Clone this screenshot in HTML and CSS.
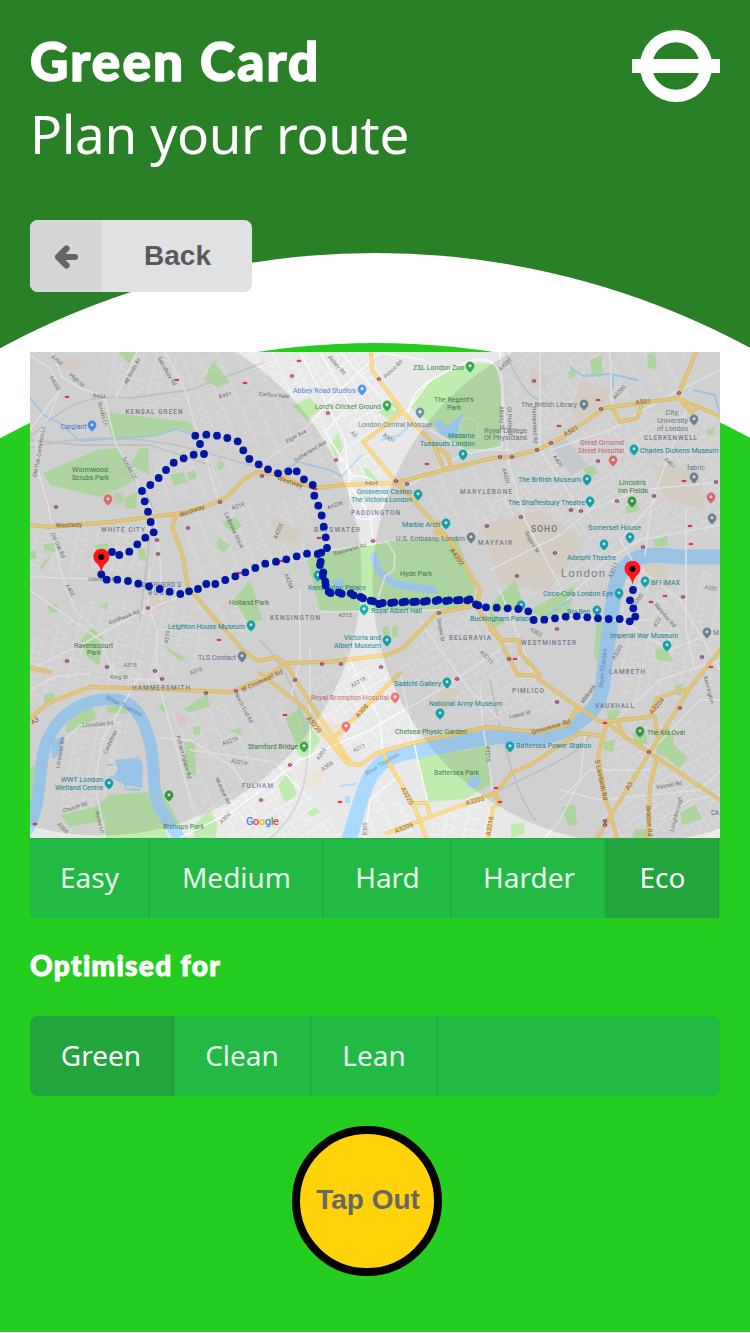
FILE: index.html
```html
<!DOCTYPE html>
<html lang="en">
<head>
<meta charset="utf-8">
<title>Green Card</title>
<link rel="stylesheet" href="styles.css">
</head>
<body>
<div class="page">
  <div class="ring"></div>
  <main class="content">
    <header class="header">
      <div>
        <h1 class="title">Green Card</h1>
        <p class="subtitle">Plan your route</p>
      </div>
      <svg class="logo" viewBox="0 0 88 72" aria-hidden="true">
        <circle cx="44" cy="36" r="29.9" fill="none" stroke="#fff" stroke-width="12.2"/>
        <rect y="29" width="88" height="14" fill="#fff"/>
      </svg>
    </header>
    <button class="back">
      <span class="back-icon"><svg viewBox="0 0 24 24" width="24" height="24"><path d="M12.500 3.500 4 12l8.500 8.500M5 12h16" fill="none" stroke="#646566" stroke-width="6.200" stroke-linejoin="round" stroke-linecap="round"/></svg></span>
      <span class="back-label">Back</span>
    </button>
    <svg class="map" id="map" viewBox="30 352 690 486">
      <defs>
        <pattern id="sa" width="17" height="10" patternUnits="userSpaceOnUse" patternTransform="rotate(-24)"><path d="M0 0H17M4 0V10M12 5H17M0 5H4" class="street"/></pattern>
        <pattern id="sb" width="13" height="18" patternUnits="userSpaceOnUse" patternTransform="rotate(-32)"><path d="M0 0V18M0 5H13M6 5V18M6 13H13" class="street"/></pattern>
        <pattern id="sc" width="20" height="12" patternUnits="userSpaceOnUse" patternTransform="rotate(12)"><path d="M0 0H20M7 0V12M7 6H20M15 6V12" class="street"/></pattern>
      </defs>
      <rect x="30" y="352" width="690" height="486" fill="#e8e8e8"/>
      <g id="streets"></g>
      <g id="areas"></g>
      <g id="roads"></g>
      <g id="signs"></g>
      <g id="labels"></g>
      <circle cx="101" cy="575" r="260.500" class="shade"/>
      <circle cx="633" cy="583" r="260.500" class="shade"/>
      <g id="route"></g>
      <g id="ends"></g>
    </svg>
    <nav class="menu menu-attached">
      <a class="item">Easy</a><a class="item">Medium</a><a class="item">Hard</a><a class="item">Harder</a><a class="item active">Eco</a>
    </nav>
    <h2 class="section">Optimised for</h2>
    <nav class="menu menu-goals">
      <a class="item active">Green</a><a class="item">Clean</a><a class="item">Lean</a>
    </nav>
    <button class="tap">Tap Out</button>
  </main>
</div>
<script src="map.js"></script>
</body>
</html>
```
FILE: styles.css
```css
* { box-sizing: border-box; }
html { background: #fff; }
body { margin: 0; overflow: hidden; font-family: "Noto Sans", "Open Sans", sans-serif; color: #fff; }
.page { position: relative; height: 1332px; background: #298026; overflow: hidden; }
.ring { position: absolute; left: 50%; top: 253px; width: 1575px; height: 1575px; margin-left: -787.5px; border-radius: 50%; background: #fff; }
.ring::after { content: ""; position: absolute; left: 0; top: 90px; width: 1575px; height: 1575px; border-radius: 50%; background: #25cd20; }
.content { position: relative; display: flex; flex-direction: column; padding: 30px 30px 0; }
.header { display: flex; justify-content: space-between; height: 190px; }
.title { margin: 0; font: 900 53px/61px Lato, sans-serif; letter-spacing: 2.2px; -webkit-text-stroke: 1.6px #fff; }
.subtitle { margin: 0; padding-top: 7px; font-size: 53px; line-height: 72px; letter-spacing: -.35px; }
.logo { width: 88px; height: 72px; }
.back { display: flex; align-self: flex-start; width: 222px; height: 72px; padding: 0; border: 0; border-radius: 8px; overflow: hidden; background: #e0e1e2; color: #5a5a5a; font: bold 28px/72px "Liberation Sans", Arial, sans-serif; }
.back-icon { display: flex; align-items: center; justify-content: center; width: 72px; height: 72px; padding-top: 2px; background: #d5d6d7; }
.back-label { flex: 1; padding-left: 1px; text-align: center; }
.map { display: block; width: 690px; height: 486px; margin-top: 60px; }
.menu { display: flex; height: 80px; border-radius: 8px; background: #22ba45; overflow: hidden; }
.menu-attached { border-radius: 0 0 4px 4px; border-top: 1px solid #20ad41; }
.item { border-right: 2px solid #20ad41; color: #e9f8ec; font-size: 28px; line-height: 78px; text-align: center; }
.menu-attached .item { line-height: 77px; padding-left: 1px; }
.menu-attached .item:nth-child(1) { width: 120px; }
.menu-attached .item:nth-child(2) { width: 174px; }
.menu-attached .item:nth-child(3) { width: 128px; }
.menu-attached .item:nth-child(4) { width: 155px; border-right-color: #21a53c; }
.menu-attached .item:nth-child(5) { width: 112px; }
.menu-goals .item:nth-child(1) { width: 144px; }
.menu-goals .item:nth-child(2) { width: 138px; }
.menu-goals .item:nth-child(3) { width: 126px; }
.menu .active { background: #21a53c; border-right-color: #1f9c3a; color: #fff; }
.section { margin: 30px 0; height: 38px; font: 900 28px/35px Lato, sans-serif; letter-spacing: 1.35px; -webkit-text-stroke: 1px #fff; }
.tap { width: 150px; height: 150px; margin: 30px 0 0 262px; padding: 0 0 2px 2px; border: 8px solid #000; border-radius: 50%; background: #ffd20a; color: #666; font: bold 28px/1 "Liberation Sans", Arial, sans-serif; white-space: nowrap; }

.street { fill: none; stroke: #f7f7f7; stroke-width: .9; }
.shade { fill: rgba(0, 0, 0, .1); }
.map text { font-family: Roboto, sans-serif; font-size: 7.2px; }
```
FILE: map.js
```js
const NS = 'http://www.w3.org/2000/svg';
const add = (id, tag, attrs, text) => {
  const el = document.createElementNS(NS, tag);
  for (const k in attrs) el.setAttribute(k, attrs[k]);
  if (text) el.textContent = text;
  document.getElementById(id).appendChild(el);
  return el;
};

// Residential street grids
[
  ['sc', '100,352 175,352 192,400 150,408 110,395'], ['sa', '180,352 290,352 350,460 290,465 240,440 195,420'],
  ['sb', '300,352 370,352 400,410 365,440 390,475 330,480 350,430'], ['sb', '508,352 600,352 600,405 510,455'],
  ['sa', '600,352 690,352 675,395 610,400'], ['sb', '520,465 610,415 720,410 720,535 640,540 590,590 500,600 480,520'],
  ['sa', '440,475 510,460 520,530 455,535 425,500'], ['sc', '30,530 150,525 165,570 30,575'],
  ['sc', '30,640 90,600 175,600 220,650 150,685 30,700'], ['sa', '155,440 240,460 215,500 155,500'],
  ['sa', '185,515 310,495 310,560 190,580'], ['sa', '170,700 280,700 320,750 250,800 190,820'],
  ['sb', '280,670 380,665 430,740 380,750 350,760'], ['sb', '430,620 480,610 570,710 480,720 400,670'],
  ['sa', '380,780 425,830 360,838'], ['sc', '620,570 720,570 720,690 620,710'],
  ['sb', '610,720 720,720 720,838 600,838'], ['sc', '65,730 130,720 105,810 60,820'],
  ['sb', '200,800 300,780 345,838 180,838'], ['sc', '435,815 490,800 490,838 430,838'], ['sa', '180,600 260,595 240,645']
].forEach(([p, pts]) => add('streets', 'polygon', { points: pts, fill: `url(#${p})` }));

// Built-up blocks, parks and lakes
[
  '480,525 540,510 585,540 550,590 500,585', '580,380 610,390 600,412 570,420', '652,465 700,470 705,510 665,500',
  '52,362 75,358 85,366 60,374', '640,555 665,560 670,590 650,590', '150,595 170,598 165,608 148,606', '310,720 350,725 340,740 320,738',
  '440,685 460,690 448,710 435,705', '305,775 325,765 320,785 305,790', '530,370 550,375 545,390 530,385', '270,515 300,530 300,545 275,540'
].forEach(pts => add('areas', 'polygon', { points: pts, fill: '#ebe4d8' }));
add('areas', 'polygon', { points: '548,440 565,438 588,465 572,476', fill: '#dbdfe5' });
add('areas', 'polygon', { points: '100,495 123,492 127,504 108,507', fill: '#f1dcdc' });
add('areas', 'polygon', { points: '176,712 186,716 187,722 178,728', fill: '#f1dcdc' });
[
  '104,412 190,422 195,433 177,428 150,437 113,441', '43,473 97,450 117,448 137,477 125,486 100,497 50,485',
  '140,448 148,448 149,475 130,465', '204,380 213,361 230,383 217,387', '118,352 136,352 129,364', '122,382 128,378 131,382',
  '170,475 183,472 188,482 174,486', '187,473 195,470 197,478 189,480', '218,460 225,464 221,471 217,468', '114,493 122,493 124,501 115,504',
  '125,497 137,492 136,509 125,508', '292,406 310,397 320,410 307,420', '378,412 393,402 403,410 390,420',
  '410,407 420,387 440,373 473,363 495,364 501,387 503,443 490,450 470,452 447,440 423,417', '330,445 338,433 343,448 337,460',
  '363,467 370,470 380,483 368,480', '307,560 320,552 387,542 457,537 475,587 473,607 373,613 320,610 312,580',
  '590,360 602,355 602,376 592,377', '647,355 655,352 657,370 648,368', '568,372 574,368 576,375 570,380', '583,468 593,465 598,473 588,478',
  '625,507 637,502 640,510 627,514', '706,431 714,427 715,434 708,436', '95,545 108,543 110,562 96,560', '137,545 145,550 146,561 139,559',
  '43,544 57,543 58,552 45,551', '30,551 36,551 36,559 30,559', '222,523 235,517 242,526 233,533', '218,538 230,545 224,553 217,548',
  '234,600 250,580 263,620 248,622', '81,640 92,628 103,637 99,666 88,658', '47,606 57,604 58,612 50,613', '99,606 108,603 107,610',
  '162,645 188,659 180,661', '43,695 54,692 55,703 46,706', '66,725 75,712 92,706 97,718 80,728 66,733', '106,707 125,704 127,714 108,713',
  '158,707 166,700 165,713', '182,710 207,694 210,707 190,712', '184,742 195,742 196,775 187,775', '94,807 110,795 147,792 160,815 168,838 105,838 105,820 70,827 60,815',
  '155,785 161,790 183,830 175,832', '193,727 200,726 200,734 194,735', '228,730 240,728 242,736', '285,718 299,708 320,740 308,760 298,755 296,745',
  '382,627 388,625 390,635 384,637', '392,627 398,625 398,637 392,637', '490,605 515,580 525,608 490,612', '530,610 575,585 570,610 545,621',
  '490,612 505,622 490,630', '594,655 597,617 608,622 598,665', '655,649 665,648 674,662 657,660', '416,757 470,750 490,743 490,785 465,799 427,802',
  '607,710 619,709 620,722 608,724', '632,734 640,730 647,735 647,744 637,745', '657,740 667,728 673,731 674,745 688,757 679,768 666,757 656,753',
  '603,742 615,740 613,752 604,750', '562,807 575,804 577,826 568,825', '680,813 695,804 702,819 682,825', '634,829 647,829 647,838 633,838',
  '278,786 288,772 297,795 285,803', '307,813 315,807 320,812 312,817', '653,540 667,536 668,546 655,547', '675,685 683,684 681,696 676,694',
  '511,824 525,823 524,834 511,838', '192,827 210,810 218,825 215,838 195,838', '30,767 38,765 38,800 30,810', '53,553 42,570 40,566'
].forEach(pts => add('areas', 'polygon', { points: pts, fill: '#c1ecb0' }));
[
  '433,421 442,420 447,427 464,412 455,440 440,434', '332,580 342,578 345,586 334,588', '115,760 135,758 143,765 142,788 125,785 112,778 118,770',
  '51,742 65,735 56,758 52,758', '345,796 350,797 350,803 345,803', '466,785 470,777 480,776 481,784 472,789'
].forEach(pts => add('areas', 'polygon', { points: pts, fill: '#aadaff' }));

const line = (d, stroke, width) => add('roads', 'path', { d, stroke, 'stroke-width': width, fill: 'none', 'stroke-linejoin': 'round', 'stroke-linecap': 'round' });

// Railways
['M30 437C70 400 90 395 130 398L190 390 265 362', 'M30 448C90 432 150 438 197 450L260 468', 'M97 457C150 480 160 510 150 535L140 620', 'M30 440 80 445 150 445 210 465', 'M490 680C505 760 520 800 535 820', 'M500 790C540 770 580 755 590 735', 'M505 352C520 385 530 398 540 400', 'M260 640C310 690 330 790 270 838'
].forEach(d => line(d, '#d3d5d8', 1.8));

// Thames, canals and the Serpentine
line('M727 557H680C650 553 635 555 625 567C612 580 613 610 609 635C604 665 605 685 598 702C585 722 560 737 537 737C510 736 490 735 460 743C430 750 400 750 383 762C365 775 362 800 348 842', '#aadaff', 15);
line('M28 829C40 805 38 790 41 770C43 735 60 712 90 702C125 693 140 705 149 739C157 765 150 795 162 812L182 842', '#aadaff', 12);
line('M374 556C378 575 388 582 400 585L434 590', '#aadaff', 7.5);
line('M30 398 45 416 60 423 80 441 135 437 155 436 176 429 194 435', '#aadaff', 1.6);
line('M278 474 298 462 330 470 342 476 362 455', '#aadaff', 1.6);
line('M570 367 583 376 610 374 638 380M613 375V387M694 390 715 395 719 412', '#aadaff', 1.8);
line('M381 440 400 435 407 428M545 617 570 600M340 786 355 784', '#aadaff', 2);
line('M137 757 142 764 130 771 142 774M108 765 113 765M110 777 124 779 126 789 140 790', '#aadaff', 2);

// White secondary roads
[
  'M52 352 62 377 80 388 104 396 116 445 130 468 155 516 160 560 162 600', 'M60 390 50 415 36 440 38 470 48 505 60 570 75 610 93 627', 'M30 430 60 390 52 370 30 355',
  'M165 352 185 390 195 425 208 465 218 500', 'M116 398 137 352', 'M30 577 100 579', 'M30 670 90 640 135 615 190 592 260 565 320 552 387 542', 'M150 570 148 605 157 630 156 680',
  'M140 675 102 740 95 785 100 810 105 838', 'M158 680 170 725 185 780 195 815', 'M160 738 190 740 230 765 250 790', 'M180 838 235 810 300 760 370 730 440 690 500 650',
  'M190 750 275 762 300 790', 'M380 352 340 390 295 440 260 465', 'M300 352 345 440 350 485 370 515 373 540', 'M340 352 365 380 395 410', 'M320 352 350 405 325 432 353 476',
  'M410 485 470 450 510 450', 'M387 541 395 555 394 570 385 576 378 598', 'M500 352 508 460 525 520 565 595', 'M540 352 540 450 560 480 580 510', 'M610 352 612 410',
  'M550 450 610 430 660 400 720 370', 'M490 570 560 535 590 510 640 490 720 482', 'M567 600 606 560 640 540 720 525', 'M655 500 620 540 635 565 680 600 720 670',
  'M620 620 670 650 720 630', 'M535 620 600 620 650 620', 'M310 650 310 760', 'M345 650 380 720 383 755', 'M400 670 417 757 428 803', 'M480 685 482 720 490 770 492 790', 'M500 590 520 640 535 680',
  'M585 735 580 780 560 820 545 838', 'M560 790 600 800 700 790 720 770', 'M615 720 660 680 720 660', 'M650 752 700 700 720 700', 'M660 820 690 800 720 795', 'M365 838 370 800 400 775',
  'M560 800 590 770 650 770', 'M645 555 652 500 690 400', 'M686 510V630L695 670', 'M350 490C340 470 380 470 385 500C375 530 350 520 350 505Z', 'M65 740 80 725 120 722',
  'M30 690 55 677 90 673M113 664 115 678 160 680', 'M425 360 375 352M428 383 406 412', 'M300 590 300 660 290 700', 'M320 612 440 610', 'M420 620 440 650 470 690 500 720', 'M30 590 100 640 110 665'
].forEach(d => line(d, '#fafafa', 1.5));
line('M409 411C412 385 440 374 470 361C490 356 500 364 502 385V447L470 453 430 430', '#fafafa', 2);
add('roads', 'circle', { cx: 469, cy: 427, r: 9, fill: 'none', stroke: '#d7efcd', 'stroke-width': 1.5 });

// Main roads: a darker casing under the yellow fill
const main = ('M30 525 50 527 110 522 150 517 183 513 210 505 227 497 243 480 257 472 280 475 297 483 317 488 343 485 395 483 440 471 493 458 510 457 537 450 563 437 605 408 677 398 697 350' +
  'M677 398 720 416M613 410 620 422 637 418 643 402M682 402 692 413 697 407M178 513 172 527 182 553 188 587 210 613 243 650 258 661 277 657 285 663 327 662 387 655 403 648 437 613 477 605 480 590 450 540 422 510 397 483 363 442 403 412 372 370 371 350' +
  'M403 412 433 443 443 467M440 449 448 456 451 468M30 718 50 702 90 687 130 688 230 692 265 678 285 663M260 673 303 707 330 742 347 763 360 765 377 753 413 743 487 727 537 732 567 725 578 707' +
  'M285 663 320 718 353 765M330 742 400 673M383 753 415 808 427 840M387 833 430 817 495 793 513 772 530 765 557 747 580 733 603 736 607 722M413 803H427L430 817M477 608 500 638M533 675 578 707 600 722 650 717 657 698 690 688 702 673 720 650' +
  'M690 688 650 752 597 838M607 723 630 740 653 755 720 800M657 758 650 785 648 838M603 736 598 755 605 798 610 812 617 838M655 717 657 735M618 723 625 738M490 628 500 640 520 640 520 653 540 675M30 668 50 672M500 640 510 660 518 675 533 675M487 840 493 808 500 802 493 793M446 537 435 532 440 523');
line(main, '#ecca76', 3.9);
line(main, '#fcdc8a', 2.6);

// Street names: text, centre x, centre y, rotation
[
  ['A404', 57, 360, 40], ['High St', 77, 380, 42], ['A4000', 55, 383, 60], ['A404', 99, 396, 8], ['Scrubs Ln', 103, 414, 75], ['All Souls Av', 132, 371, -62], ['Scrubs Ln', 130, 468, 60],
  ['Old Oak Common Ln', 39, 452, -80], ['B451', 225, 395, -15], ['Carlton Vale', 274, 395, 5], ['Abbey Rd', 337, 365, 48], ['Prince Rd', 393, 369, -45], ['Elgin Ave', 296, 436, -30],
  ['Sutherland Ave', 310, 451, -32], ['A5', 354, 434, 45], ['B507', 389, 438, 35], ['A404', 371, 483, 0], ['A4206', 335, 505, -20], ['A4201', 505, 364, -45], ['A5200', 619, 392, -50],
  ['Albany St', 502, 418, 88], ['Gt Portland', 510, 421, 88], ['Hampstead Rd', 535, 425, 88], ['A400', 558, 461, 55], ['A4201', 506, 476, 75], ['A401', 670, 463, 45],
  ['A219', 167, 637, -80], ['A402', 70, 590, 60], ['Old Oak Rd', 58, 545, 65], ['Goldhawk Rd', 124, 617, -20], ['Ladbroke Grove', 234, 530, 65], ['A315', 130, 665, 0], ['A315', 196, 671, -20], ['Uxbridge Rd', 103, 579, 0],
  ['Bayswater Rd', 350, 549, -15], ['A315', 345, 615, 0], ['A4204', 289, 581, 70], ['A4205', 278, 531, -65], ['Regent St', 532, 542, 60], ['Sloane St', 441, 630, 80], ['A302', 536, 632, 35], ['A3211', 613, 570, -65],
  ['Lonsdale Rd', 60, 753, -80], ['Lonsdale Rd', 98, 724, -5], ['Castelnau', 110, 742, -65], ['Church Rd', 75, 807, -18], ['A306', 63, 828, 45], ['Rocks Ln', 100, 822, 75], ['Fulham Palace Rd', 184, 757, 75], ['North End Rd', 244, 708, 62],
  ['A3219', 230, 741, -20], ['A3219', 239, 762, 8], ['Munster Rd', 223, 791, 65], ['A304', 225, 818, -45], ['A304', 321, 754, -55], ['A308', 327, 766, -35], ['A217', 359, 748, -25], ['A3218', 358, 682, -30], ['A3213', 487, 657, 45],
  ['A3216', 488, 754, 88], ['B305', 365, 829, -88], ['Lupus St', 520, 714, -12], ['Millbank', 588, 694, -55], ['Kennington', 709, 690, 75], ['Vassall Rd', 669, 785, -10], ['Loughborough', 676, 814, -75], ['Waterloo Rd', 665, 615, 50], ['A23', 657, 622, -60], ['A3200', 637, 601, -55], ['A3203', 617, 652, -60], ['Salusbury Rd', 167, 371, 60], ['A219', 238, 506, -20], ['King St', 119, 677, 0], ['A201', 711, 588, 10]
].forEach(([t, x, y, r]) => add('labels', 'text', { x, y: y + 2, fill: '#777', 'text-anchor': 'middle', style: 'font-size:5.6px', transform: `rotate(${r} ${x} ${y})` }, t));
[
  ['Westway', 69, 525, -2], ['Westway', 192, 511, -20], ['Westway', 290, 482, 18], ['A501', 643, 402, -5], ['A501', 571, 431, -28], ['A4202', 457, 557, 55], ['W Cromwell Rd', 262, 681, -25],
  ['A3220', 314, 725, 50], ['A308', 362, 711, -48], ['A3220', 407, 796, 62], ['A3205', 404, 828, -22], ['A3205', 475, 801, -15], ['A3216', 490, 826, -80], ['Grosvenor Rd', 551, 727, -16],
  ['A3204', 657, 706, -50], ['S Lambeth Rd', 601, 780, 78], ['A3', 629, 786, -60], ['Brixton Rd', 649, 821, 86], ['A3', 35, 721, -30]
].forEach(([t, x, y, r]) => add('labels', 'text', { x, y: y + 2, fill: '#a67a42', 'text-anchor': 'middle', style: 'font-size:6.6px;font-weight:500', transform: `rotate(${r} ${x} ${y})` }, t));
[['River Thames', 124, 706, 27], ['River Thames', 382, 764, -32], ['River Thames', 603, 668, -84]].forEach(([t, x, y, r]) => add('labels', 'text', { x, y: y + 2, fill: '#6c96c8', 'text-anchor': 'middle', style: 'font-size:6.4px', transform: `rotate(${r} ${x} ${y})` }, t));

// Place names: text, left, right, baseline
const G = '#4b8350', T = '#168f9e', D = '#7d879b', P = '#6e8291', R = '#d26d75', B = '#5286dc', K = '#338a3c';
const names = {
  [D]: [['KENSAL GREEN', 125.5, 182.5, 414], ['PADDINGTON', 351, 400, 515], ['MARYLEBONE', 460, 512, 494], ['CLERKENWELL', 644, 697, 439.5], ['WHITE CITY', 101, 145, 532], ["SHEPHERD'S", 140, 181, 587], ['BUSH', 148, 170, 595], ['BAYSWATER', 314, 360, 532], ['MAYFAIR', 478, 512, 545], ['KENSINGTON', 270, 320, 620], ['BELGRAVIA', 449, 491, 640], ['WESTMINSTER', 521, 576, 645], ['LAMBETH', 609, 645, 674], ['HAMMERSMITH', 132, 190, 690], ['FULHAM', 242, 273, 788], ['PIMLICO', 512, 544, 693], ['VAUXHALL', 595, 634, 708], ['CA', 711, 719, 815]],
  [G]: [['Wormwood', 72, 108, 472], ['Scrubs Park', 72, 109, 480], ["The Regent's", 434, 474, 402], ['Park', 447, 461, 410], ['Holland Park', 229, 269, 605], ['Ravenscourt', 74, 113, 648], ['Park', 87, 101, 655], ['Hyde Park', 400, 432, 576], ['Bishops Park', 163, 204, 829], ['Battersea Park', 434, 479, 775]],
  [K]: [["Lord's Cricket Ground", 315, 381, 409], ['ZSL London Zoo', 413, 464, 369.5], ["Lincoln's", 619, 646, 485], ['Inn Fields', 618, 648, 493], ['Stamford Bridge', 248, 298, 749], ['Chelsea Physic Garden', 395, 467, 734], ['The Kia Oval', 647, 685, 735]],
  [B]: [['Cargiant', 60.5, 86.5, 428.5], ['Abbey Road Studios', 293, 355.5, 393]],
  [P]: [['London Central Mosque', 358, 432, 427], ['Royal College', 484, 527, 432.5], ['Of Physicians', 484, 527, 440], ['The British Library', 521, 577, 407], ['City,', 665.5, 679, 415], ['University', 657, 688, 423], ['of London', 657, 688, 431], ['fabric', 687, 705, 470], ['TLS Contact', 198, 236, 660], ['U.S. Embassy, London', 396, 465, 541], ['M', 713, 719, 635]],
  [R]: [['Great Ormond', 580, 624, 445], ['Street Hospital', 578, 624, 453], ['Royal Brompton Hospital', 311, 389, 700]],
  [T]: [['Madame', 448, 475, 438], ['Tussauds London', 420, 475, 446], ['Grosvenor Casino', 357, 412, 494], ['The Victoria London', 351, 412, 502], ['Charles Dickens Museum', 640, 718.5, 453], ['The British Museum', 518, 581, 482], ['The Shaftesbury Theatre', 508, 585, 505], ['Leighton House Museum', 168, 245, 629], ['Marble Arch', 402, 440, 527], ['Kensington Palace', 308, 366, 590], ['Royal Albert Hall', 371, 422, 613], ['Victoria and', 344, 381, 640], ['Albert Museum', 334, 381, 648], ['Buckingham Palace', 470, 532, 621], ['Somerset House', 588, 641, 530], ['Adelphi Theatre', 567, 616, 560], ['Coco-Cola London Eye', 543, 613, 596], ['BFI IMAX', 651, 680, 585], ['Big Ben', 567, 590, 614], ['Imperial War Museum', 610, 678, 638], ['WWT London', 61, 103, 782], ['Wetland Centre', 55, 103, 790], ['Saatchi Gallery', 394, 441, 686], ['National Army Museum', 429, 502, 706], ['Battersea Power Station', 516, 591, 748]]
};
for (const fill in names) names[fill].forEach(([t, a, b, y]) => add('labels', 'text', {
  x: a, y, fill, textLength: b - a, lengthAdjust: fill === D ? 'spacing' : 'spacingAndGlyphs', style: fill === D ? 'font-size:6.4px;font-weight:500' : ''
}, t));
add('labels', 'text', { x: 531, y: 531.5, fill: '#7a7f88', textLength: 26, style: 'font-size:8.5px;font-weight:500' }, 'SOHO');
add('labels', 'text', { x: 561, y: 577, fill: '#8b8b8f', textLength: 44, style: 'font-size:11.5px' }, 'London');
const google = add('labels', 'text', { x: 246, y: 824.5, style: 'font-size:11px;font-weight:500', textLength: 33 });
['#4285f4', '#ea4335', '#fbbc05', '#4285f4', '#34a853', '#ea4335'].forEach((c, i) => {
  const s = document.createElementNS(NS, 'tspan');
  s.setAttribute('fill', c);
  s.textContent = 'Google'[i];
  google.appendChild(s);
});

// Place pins
const pins = {
  '#5596ff': [[92, 425], [362, 389]],
  '#38a848': [[387, 405], [470, 366], [632, 501], [304, 746], [169, 795], [640, 731]],
  '#7890a3': [[420, 412], [584, 404], [694, 419], [694, 477], [242, 656], [471, 537], [707, 632], [712, 518]],
  '#f37478': [[108, 499], [613, 460], [711, 497], [395, 697], [346, 726]],
  '#16b1bd': [[463, 454], [418, 494], [634, 449], [587, 479], [590, 501], [251, 625], [446, 523], [318, 575], [364, 609], [387, 640], [521, 605], [630, 537], [604, 544], [619, 593], [645, 581], [597, 610], [667, 645], [109, 783], [447, 682], [440, 713], [510, 746]]
};
for (const fill in pins) pins[fill].forEach(([x, y]) => {
  add('signs', 'path', { fill, d: `M${x - 4.4} ${y}a4.400 4.400 0 1 1 8.800 0q0 2.800-4.400 6.400q-4.400-3.600-4.400-6.400` });
  add('signs', 'circle', { cx: x, cy: y - .3, r: 1.500, fill: '#f1f7f7' });
});

// Underground roundels and rail marks
[[56, 507], [262, 476], [220, 502], [292, 376], [328, 413], [379, 379], [336, 460], [396, 481], [407, 484], [373, 541], [439, 613], [341, 664], [534, 381], [601, 409], [679, 393], [551, 443], [537, 450], [512, 457], [500, 457], [598, 461], [654, 496], [617, 501], [571, 510], [716, 482], [188, 528], [157, 540], [158, 554], [148, 608], [67, 661], [107, 667], [155, 671], [162, 679], [206, 693], [236, 691], [261, 800], [290, 765], [295, 680], [521, 517], [555, 553], [581, 511], [643, 547], [683, 597], [517, 576], [557, 629], [509, 659], [702, 657], [457, 679], [557, 702], [680, 708], [649, 752], [605, 821], [605, 825], [487, 526], [322, 664], [381, 667]
].forEach(([x, y]) => {
  add('signs', 'circle', { cx: x, cy: y, r: 1.500, fill: '#fff', stroke: '#dc4560', 'stroke-width': 1.100 });
  add('signs', 'path', { d: `M${x - 2.200} ${y}h4.400`, stroke: '#4053a8', 'stroke-width': 1 });
});
[[67, 397], [177, 380], [245, 383], [299, 361], [427, 464], [315, 489], [319, 538], [281, 561], [239, 573], [219, 640], [559, 426], [598, 400], [684, 481], [690, 526], [691, 544], [665, 596], [651, 602], [515, 659], [711, 667], [605, 723], [340, 802], [285, 715], [35, 824], [496, 788], [500, 802]
].forEach(([x, y]) => add('signs', 'path', { d: `M${x - 2.200} ${y}h4.400`, stroke: '#f1404c', 'stroke-width': 2.200 }));

// Planned route
const route = [195.3,435.7,206.3,434.7,217,435.7,227.3,438,237.7,441.3,243.3,450.3,249.3,459,258.7,464.3,200,444,204,454,193.7,454.7,183.7,458.3,173.7,462.7,166,470,158.7,478,150.3,485,142,491,144.7,501.3,148,511.7,
  268,469.3,278,473.3,288.3,471.3,296.7,471.3,304,479.3,312.7,485,314.3,495.7,318.3,505.7,321.7,515.5,323.7,526.7,325.7,537.3,327,548,
  150.7,522,153.7,532.3,145.3,537.7,137.3,544.3,129.3,551.7,119.3,555,112,552,101.3,574.3,106.7,579.7,117.3,579.7,128,581,138.3,583.7,149,586.3,159.7,589,169.7,591.7,180.3,594,189,591.3,198,589,206.3,584,215.3,584,225.3,580,235.3,576.3,245.3,572.3,255.3,568,
  265.3,563.7,276,561.7,286.3,559.3,296.7,556.3,307,553.7,317.7,554,321.3,552.7,320.7,561.7,320,565,323.3,572.3,322.7,576,325.3,581.7,325.7,585.3,328.7,591.7,330.7,593,338.7,592.3,341.7,593.7,350.7,593.3,353.7,595.3,360.7,597,363,598.3,370.7,600.7,373.3,601.3,379,604,382.7,603,391,603,394.3,602.3,402.3,602.3,405.3,601.7,413,602,416,601.7,423.7,601.7,427,601,435.7,601,438.3,600,446,601,449,600.3,456.7,600.3,459.7,600,467.3,600.3,469.7,599.3,476,604.3,478.3,605.3,486,607.3,
  496.7,607.7,507.7,608.3,518.3,609,528.3,611.3,533.7,620,544.3,619.7,555,618.3,565.7,616.7,576.7,616.3,587.3,617.3,598,618.3,608.7,619,619.7,619,629.7,621.3,635.3,616.7,633.3,608.3,630,600.3,633,590];
for (let i = 0; i < route.length; i += 2) add('route', 'circle', { cx: route[i], cy: route[i + 1], r: 3.900, fill: '#0016a5' });
[[101.300, 557], [632.500, 569]].forEach(([x, y]) => {
  add('ends', 'path', { fill: '#ff141c', d: `M${x} ${y + 16}Q${x - 1} ${y + 9} ${x - 5.500} ${y + 5.500}A8 8 0 1 1 ${x + 5.500} ${y + 5.500}Q${x + 1} ${y + 9} ${x} ${y + 16}` });
  add('ends', 'circle', { cx: x, cy: y, r: 3, fill: '#000' });
});
```
